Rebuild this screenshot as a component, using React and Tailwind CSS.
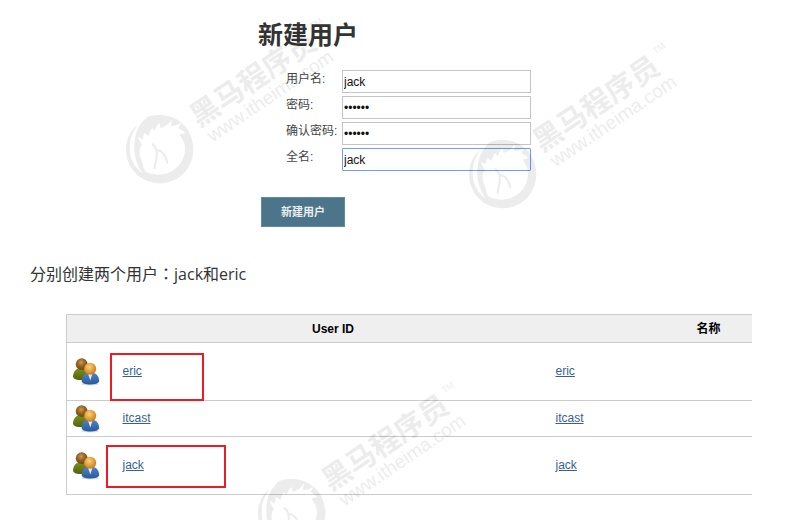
import { useState } from 'react';

const fields = [
  { id: 'username', label: '用户名:', type: 'text', initial: 'jack' },
  { id: 'password', label: '密码:', type: 'password', initial: '123456' },
  { id: 'confirm', label: '确认密码:', type: 'password', initial: '123456' },
  { id: 'fullname', label: '全名:', type: 'text', initial: 'jack', active: true },
];

const users = [
  { id: 'eric', row: 'h-[58px]', mark: 'left-[-7px] top-[10px] w-[94px] h-[48px]' },
  { id: 'itcast', row: 'h-[36px]' },
  { id: 'jack', row: 'h-[58px]', mark: 'left-[-11px] top-[8px] w-[120px] h-[43px]' },
];

const UsersIcon = () => (
  <svg className="block" width="28" height="28" viewBox="0 0 28 28" aria-hidden="true">
    <defs>
      <radialGradient id="headBack" cx="0.45" cy="0.35" r="0.65">
        <stop offset="0" stopColor="#c79a5c" />
        <stop offset="0.5" stopColor="#96631f" />
        <stop offset="1" stopColor="#744510" />
      </radialGradient>
      <radialGradient id="headFront" cx="0.42" cy="0.35" r="0.65">
        <stop offset="0" stopColor="#f8d08a" />
        <stop offset="0.55" stopColor="#e5a23c" />
        <stop offset="1" stopColor="#c57d18" />
      </radialGradient>
      <linearGradient id="bodyBack" x1="0" y1="0" x2="0" y2="1">
        <stop offset="0" stopColor="#7d8f22" />
        <stop offset="1" stopColor="#526208" />
      </linearGradient>
      <linearGradient id="bodyFront" x1="0" y1="0" x2="0" y2="1">
        <stop offset="0" stopColor="#4f83c4" />
        <stop offset="1" stopColor="#265a9f" />
      </linearGradient>
    </defs>
    <ellipse cx="18" cy="26" rx="9" ry="1.5" fill="#000" opacity="0.15" />
    <path d="M1 19c0-4 2-7.500 5-8.500h7c3 1 5 4 5 8.500-1 2.500-4 3-8.500 3s-7.500-.5-8.500-3z" fill="url(#bodyBack)" />
    <circle cx="9.700" cy="6.200" r="5.900" fill="url(#headBack)" />
    <path d="M9.700 23.500c0-4.500 2-7.500 5-8.500h7c3.500 1 5.500 4 5.500 8.500-1 2-4 3-9 3s-7.500-1-8.500-3z" fill="url(#bodyFront)" />
    <path d="M16 15.500h4.500l-2.200 7z" fill="#e4eefa" />
    <circle cx="18.200" cy="10.800" r="6" fill="url(#headFront)" />
  </svg>
);

// Horse head badge followed by the slanted brand name
const BrandStamp = ({ x, y }) => (
  <g transform={`translate(${x} ${y})`}>
    <g transform="scale(0.333) translate(-114 -117)">
      <path
        fillRule="evenodd"
        d="M78 20C95 14 120 14 135 17C185 27 214 70 214 118C214 175 170 220 114 220C58 220 12 177 12 118C12 85 26 60 48 44C30 65 22 90 23 118C24 150 38 175 62 190C46 170 36 140 37 105C38 65 55 35 78 20Z
          M62 88L66 68L80 78C82 68 86 60 90 54L98 64C100 54 106 44 112 38L116 54C128 52 140 42 150 28L147 48C158 48 168 44 178 38L170 54C176 58 184 62 190 68C184 72 180 72 172 74C182 85 190 100 189 118C188 160 155 192 114 194C100 194 85 192 72 186C62 176 64 160 56 145C50 130 52 112 60 104C56 98 50 92 48 80Z"
      />
      <path
        d="M92 103C102 110 106 124 104 142C102 154 98 162 98 174M105 120C122 122 132 138 136 158"
        fill="none"
        stroke="currentColor"
        strokeWidth="6"
        strokeLinecap="round"
      />
    </g>
    <g transform="rotate(-34)">
      <text x="44" y="4" className="text-[29px] font-bold font-['Noto_Sans_CJK_SC',sans-serif]">黑马程序员</text>
      <text x="47" y="24" className="text-[19px] font-['Liberation_Sans',sans-serif]">www.itheima.com</text>
      <text x="193" y="-14" className="text-[9px] font-['Liberation_Sans',sans-serif]">TM</text>
    </g>
  </g>
);

const UserForm = () => {
  const [values, setValues] = useState(
    Object.fromEntries(fields.map((f) => [f.id, f.initial]))
  );

  return (
    <form className="pl-[258px]" onSubmit={(e) => e.preventDefault()}>
      <h1 className="text-[25px] leading-8 font-bold text-[#333]">新建用户</h1>
      <div className="mt-[19px] ml-7 grid grid-cols-[56px_189px] gap-y-[3px] text-xs">
        {fields.map((f) => (
          <div key={f.id} className="contents">
            <label htmlFor={f.id} className="h-[18px] leading-[18px] whitespace-nowrap text-[#444]">
              {f.label}
            </label>
            <input
              id={f.id}
              type={f.type}
              autoComplete="off"
              value={values[f.id]}
              onChange={(e) => setValues({ ...values, [f.id]: e.target.value })}
              className={`h-[23px] w-full border px-px text-xs text-[#111] outline-none ${
                f.active ? 'border-[#6f9ff0] rounded-[1px]' : 'border-[#c4c4c4]'
              }`}
            />
          </div>
        ))}
      </div>
      <button
        type="submit"
        className="mt-[26px] ml-[3px] block h-[30px] w-[84px] border border-[#5b8da3] bg-[#4c758b] text-[11px] font-bold text-[#eee]"
      >
        新建用户
      </button>
    </form>
  );
};

const UserTable = () => (
  <div className="mt-[28px] ml-[66px] mr-[50px] overflow-hidden">
    <table className="w-[117%] table-fixed border-collapse border border-[#ccc] text-xs">
      <colgroup>
        <col className="w-[50px]" />
        <col className="w-[433px]" />
        <col />
      </colgroup>
      <thead>
        <tr className="h-[28px] bg-[#efefef] text-black">
          <th className="p-0" />
          <th className="p-0 font-bold">User ID</th>
          <th className="p-0 font-bold">名称</th>
        </tr>
      </thead>
      <tbody>
        {users.map((u) => (
          <tr key={u.id} className={`${u.row} border-t border-[#ccc]`}>
            <td className="p-0 pl-[5px]">
              <UsersIcon />
            </td>
            <td className="relative p-0 pb-[2px] pl-[6px]">
              <a href={`#${u.id}`} className="text-[#385f8f] underline">{u.id}</a>
              {u.mark && <span className={`absolute border-2 border-[#ed1c24] ${u.mark}`} />}
            </td>
            <td className="p-0 pb-[2px] pl-[6px]">
              <a href={`#${u.id}`} className="text-[#385f8f] underline">{u.id}</a>
            </td>
          </tr>
        ))}
      </tbody>
    </table>
  </div>
);

export default function App() {
  return (
    <div className="relative min-h-screen overflow-hidden bg-white pt-[19px] pb-[25px] font-['Liberation_Sans','Noto_Sans_CJK_SC',sans-serif]">
      <UserForm />
      <p className="mt-[34px] pl-[30px] text-base leading-6 text-[#333] font-['Open_Sans','Noto_Sans_CJK_SC',sans-serif]">
        分别创建两个用户<span lang="zh-TW" className="font-['Noto_Sans_CJK_TC',sans-serif]">：</span>jack和eric
      </p>
      <UserTable />
      <svg
        className="pointer-events-none absolute inset-0 h-full w-full text-black opacity-[0.07]"
        fill="currentColor"
        aria-hidden="true"
      >
        <BrandStamp x={160} y={149} />
        <BrandStamp x={503} y={174} />
        <BrandStamp x={292} y={513} />
      </svg>
    </div>
  );
}
